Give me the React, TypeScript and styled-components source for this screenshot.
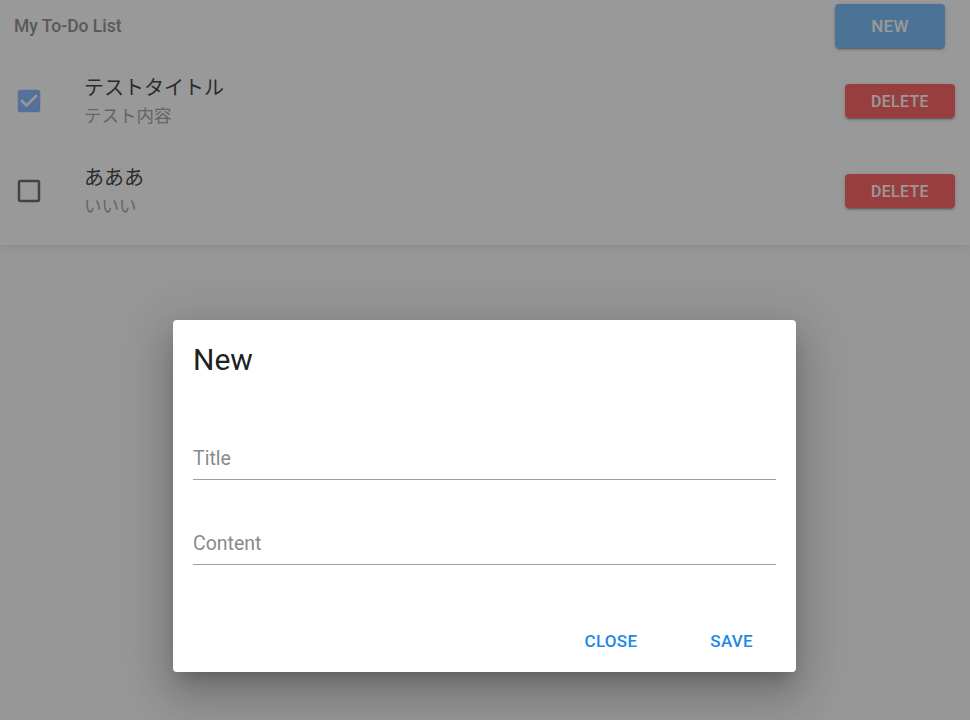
import React from "react";
import styled, { createGlobalStyle } from "styled-components";

const GlobalStyle = createGlobalStyle`
  html, body { margin: 0; padding: 0; }
  body {
    background: #fafafa;
    font-family: Roboto, "Noto Sans CJK JP", "Noto Sans", sans-serif;
    width: 970px;
    height: 720px;
    overflow: hidden;
  }
`;

const Page = styled.div`
  position: relative;
  width: 970px;
  height: 720px;
`;

const Sheet = styled.div`
  background: #ffffff;
  box-shadow: 0 2px 8px rgba(0, 0, 0, 0.07);
  padding-bottom: 9px;
`;

const Header = styled.div`
  display: flex;
  align-items: center;
  justify-content: space-between;
  height: 52px;
  padding: 0 25px 0 14px;
`;

const AppTitle = styled.div`
  font-size: 17.5px;
  font-weight: 500;
  color: #959595;
`;

const List = styled.div`
  margin-top: 4px;
`;

const RaisedButton = styled.button<{ $tone: "blue" | "red"; $h: number; $fs: number }>`
  border: none;
  border-radius: 4px;
  width: 110px;
  height: ${(p) => p.$h}px;
  background: ${(p) => (p.$tone === "blue" ? "#7cc0fb" : "#ff6868")};
  color: #ffffff;
  font-family: Roboto, sans-serif;
  font-weight: 500;
  font-size: ${(p) => p.$fs}px;
  letter-spacing: 0.3px;
  box-shadow: 0 3px 1px -2px rgba(0, 0, 0, 0.2), 0 2px 2px rgba(0, 0, 0, 0.14),
    0 1px 5px rgba(0, 0, 0, 0.12);
  cursor: pointer;
`;

const Row = styled.div`
  display: flex;
  align-items: center;
  height: 90px;
  padding: 0 15px 0 14px;
`;

const CheckCell = styled.div`
  width: 70px;
  display: flex;
  align-items: center;
`;

const TextCell = styled.div`
  flex: 1;
  display: flex;
  flex-direction: column;
  gap: 4px;
`;

const ItemTitle = styled.div`
  font-size: 20px;
  color: #4a4a4a;
  line-height: 24px;
  font-family: "Noto Sans CJK JP", Roboto, sans-serif;
`;

const ItemSub = styled.div`
  font-size: 17.5px;
  color: #a8a8a8;
  line-height: 24px;
  font-family: "Noto Sans CJK JP", Roboto, sans-serif;
`;

const Backdrop = styled.div`
  position: absolute;
  inset: 0;
  background: rgba(0, 0, 0, 0.4);
  display: flex;
  align-items: flex-start;
  justify-content: center;
  padding-top: 320px;
  box-sizing: border-box;
`;

const Dialog = styled.div`
  width: 623px;
  height: 352px;
  margin-left: -1px;
  background: #ffffff;
  border-radius: 4px;
  box-sizing: border-box;
  padding: 0 20px;
  display: flex;
  flex-direction: column;
  box-shadow: 0 11px 15px -7px rgba(0, 0, 0, 0.2), 0 24px 38px 3px rgba(0, 0, 0, 0.14),
    0 9px 46px 8px rgba(0, 0, 0, 0.12);
`;

const DialogTitle = styled.h2`
  margin: 0;
  padding-top: 22px;
  font-size: 30px;
  font-weight: 400;
  line-height: 36px;
  color: #212121;
`;

const Fields = styled.div`
  display: flex;
  flex-direction: column;
  gap: 24px;
  margin-top: 41px;
`;

const Field = styled.label`
  height: 61px;
  box-sizing: border-box;
  border-bottom: 1px solid #9e9e9e;
  display: flex;
  align-items: flex-end;
  padding-bottom: 6px;
`;

const Input = styled.input`
  border: none;
  outline: none;
  padding: 0;
  width: 100%;
  font-family: Roboto, sans-serif;
  font-size: 19.5px;
  line-height: 28px;
  color: #212121;
  background: transparent;
  &::placeholder {
    color: #8a8a8a;
  }
`;

const Actions = styled.div`
  margin-top: auto;
  display: flex;
  justify-content: flex-end;
  gap: 27px;
  padding-bottom: 11px;
`;

const TextButton = styled.button`
  border: none;
  background: transparent;
  color: #1e88e5;
  font-family: Roboto, sans-serif;
  font-weight: 500;
  font-size: 17px;
  letter-spacing: 0.3px;
  height: 40px;
  padding: 0 23px;
  min-width: 64px;
  cursor: pointer;
`;

const CheckedIcon = () => (
  <svg width="30" height="30" viewBox="0 0 24 24">
    <path
      fill="#90bcff"
      d="M19 3H5c-1.11 0-2 .9-2 2v14c0 1.1.89 2 2 2h14c1.11 0 2-.9 2-2V5c0-1.1-.89-2-2-2zm-9 14l-5-5 1.41-1.41L10 14.17l7.59-7.59L19 8l-9 9z"
    />
  </svg>
);

const BlankIcon = () => (
  <svg width="30" height="30" viewBox="0 0 24 24">
    <path
      fill="#707070"
      d="M19 5v14H5V5h14m0-2H5c-1.1 0-2 .9-2 2v14c0 1.1.9 2 2 2h14c1.1 0 2-.9 2-2V5c0-1.1-.9-2-2-2z"
    />
  </svg>
);

const todos = [
  { title: "テストタイトル", content: "テスト内容", done: true },
  { title: "あああ", content: "いいい", done: false },
];

export default function App() {
  return (
    <Page>
      <GlobalStyle />
      <Sheet>
        <Header>
          <AppTitle>My To-Do List</AppTitle>
          <RaisedButton $tone="blue" $h={44} $fs={17}>NEW</RaisedButton>
        </Header>
        <List>
          {todos.map((t) => (
            <Row key={t.title}>
              <CheckCell>{t.done ? <CheckedIcon /> : <BlankIcon />}</CheckCell>
              <TextCell>
                <ItemTitle>{t.title}</ItemTitle>
                <ItemSub>{t.content}</ItemSub>
              </TextCell>
              <RaisedButton $tone="red" $h={34} $fs={16}>DELETE</RaisedButton>
            </Row>
          ))}
        </List>
      </Sheet>
      <Backdrop>
        <Dialog>
          <DialogTitle>New</DialogTitle>
          <Fields>
            <Field>
              <Input placeholder="Title" />
            </Field>
            <Field>
              <Input placeholder="Content" />
            </Field>
          </Fields>
          <Actions>
            <TextButton>CLOSE</TextButton>
            <TextButton>SAVE</TextButton>
          </Actions>
        </Dialog>
      </Backdrop>
    </Page>
  );
}
